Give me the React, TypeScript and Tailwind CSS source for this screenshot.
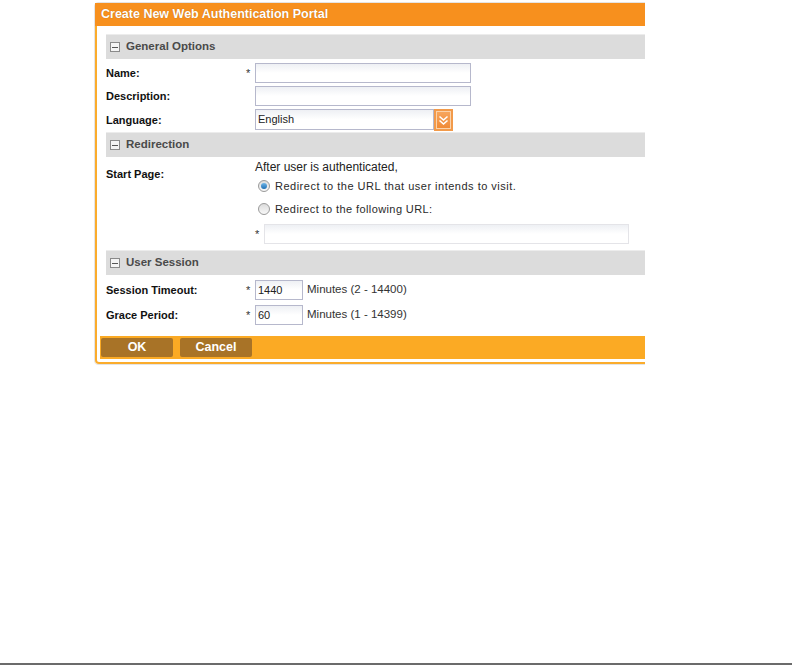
import React from "react";

const font = { fontFamily: '"Liberation Sans", Arial, sans-serif' };

function Minus() {
  return (
    <span className="flex h-[10px] w-[10px] items-center justify-center border border-[#8a8a8a] bg-[#f4f4f4]">
      <span className="h-px w-[6px] bg-[#555]" />
    </span>
  );
}

function Band({ title }: { title: string }) {
  return (
    <div className="flex h-[25px] items-center gap-[6px] border-t border-[#ececec] bg-[#dcdcdc] pl-[4px]">
      <Minus />
      <span className="text-[11.5px] font-bold text-[#4a4a4a]">{title}</span>
    </div>
  );
}

function Input({ w, value, faint }: { w: string; value?: string; faint?: boolean }) {
  return (
    <div
      className={`${w} flex h-[20px] items-center border bg-gradient-to-b from-[#eef0f4] via-white to-white pl-[2px] text-[11px] text-[#222] ${
        faint ? "border-[#e4e4e8]" : "border-[#b6b8cc]"
      }`}
    >
      {value}
    </div>
  );
}

function Radio({ checked }: { checked?: boolean }) {
  return (
    <span className="flex h-[12px] w-[12px] items-center justify-center rounded-full border border-[#9a9a9a] bg-gradient-to-b from-[#dcdcdc] to-[#f8f8f8]">
      {checked && <span className="h-[6px] w-[6px] rounded-full bg-gradient-to-b from-[#6fb6e8] to-[#1c6fb3]" />}
    </span>
  );
}

function Row({ label, star, children, top = "mt-[3px]" }: { label: string; star?: boolean; children: React.ReactNode; top?: string }) {
  return (
    <div className={`flex items-center ${top}`}>
      <div className="w-[140px] text-[11px] font-bold text-[#111]">{label}</div>
      <div className="w-[9px] text-[11px] text-[#333]">{star ? "*" : ""}</div>
      {children}
    </div>
  );
}

export default function App() {
  return (
    <div className="flex h-[666px] w-[792px] flex-col bg-white" style={font}>
      <div className="ml-[94px] mt-[2px] w-[551px] overflow-hidden">
        <div className="w-[600px] rounded-[4px] border border-[#e4e4e4]">
          <div className="flex h-[23px] items-center bg-[#f7901e] pl-[6px] text-[12.5px] font-bold text-white [text-shadow:0_0_1px_rgba(120,60,0,0.5)]">
            Create New Web Authentication Portal
          </div>
          <div className="rounded-b-[4px] border-x-2 border-b-2 border-[#fbac2c] pb-[3px] pt-[8px]">
            <div className="pl-[9px]">
              <Band title="General Options" />
              <Row label="Name:" star top="mt-[4px]">
                <Input w="w-[216px]" />
              </Row>
              <Row label="Description:">
                <Input w="w-[216px]" />
              </Row>
              <Row label="Language:">
                <div className="flex items-start">
                  <div className="flex h-[21px] w-[179px] items-center border border-[#b6b8cc] bg-gradient-to-b from-[#eef0f4] via-white to-white pl-[2px] text-[11px] text-[#222]">
                    English
                  </div>
                  <div className="flex h-[22px] w-[19px] items-center justify-center bg-[#f29a4a] p-[2px]">
                    <div className="flex h-full w-full items-center justify-center border border-[#fbd2aa] bg-gradient-to-b from-[#f7a55c] to-[#f08b36]">
                      <svg width="11" height="11" viewBox="0 0 11 11">
                        <polyline points="1.5,1.5 5.5,5 9.5,1.5" fill="none" stroke="white" strokeWidth="1.6" />
                        <polyline points="1.5,5.5 5.5,9 9.5,5.5" fill="none" stroke="white" strokeWidth="1.6" />
                      </svg>
                    </div>
                  </div>
                </div>
              </Row>
              <div className="mt-px">
                <Band title="Redirection" />
              </div>
              <div className="mt-[3px] flex">
                <div className="w-[149px] pt-[7px] text-[11px] font-bold leading-[14px] text-[#111]">Start Page:</div>
                <div className="flex flex-col">
                  <div className="text-[12px] leading-[14px] text-[#222]">After user is authenticated,</div>
                  <div className="ml-[3px] mt-[5px] flex h-[14px] items-center gap-[5px]">
                    <Radio checked />
                    <span className="text-[11px] tracking-[0.5px] text-[#2a2a2a]">Redirect to the URL that user intends to visit.</span>
                  </div>
                  <div className="ml-[3px] mt-[9px] flex h-[14px] items-center gap-[5px]">
                    <Radio />
                    <span className="text-[11px] tracking-[0.4px] text-[#2a2a2a]">Redirect to the following URL:</span>
                  </div>
                  <div className="mt-[8px] flex items-center">
                    <span className="w-[9px] text-[11px] text-[#333]">*</span>
                    <Input w="w-[365px]" faint />
                  </div>
                </div>
              </div>
              <div className="mt-[6px]">
                <Band title="User Session" />
              </div>
              <Row label="Session Timeout:" star top="mt-[5px]">
                <Input w="w-[48px]" value="1440" />
                <span className="ml-[4px] text-[11.5px] text-[#333]">Minutes (2 - 14400)</span>
              </Row>
              <Row label="Grace Period:" star top="mt-[5px]">
                <Input w="w-[48px]" value="60" />
                <span className="ml-[4px] text-[11.5px] text-[#333]">Minutes (1 - 14399)</span>
              </Row>
            </div>
            <div className="ml-[3px] mt-[11px] flex h-[23px] items-center gap-[7px] bg-[#fbaa24] pl-px">
              <button className="h-[19px] w-[72px] rounded-[2px] bg-[#a87327] text-[12.5px] font-bold text-white">OK</button>
              <button className="h-[19px] w-[72px] rounded-[2px] bg-[#a87327] text-[12.5px] font-bold text-white">Cancel</button>
            </div>
          </div>
        </div>
      </div>
      <div className="mb-px mt-auto h-[2px] w-full bg-[#6b6b6b]" />
    </div>
  );
}
